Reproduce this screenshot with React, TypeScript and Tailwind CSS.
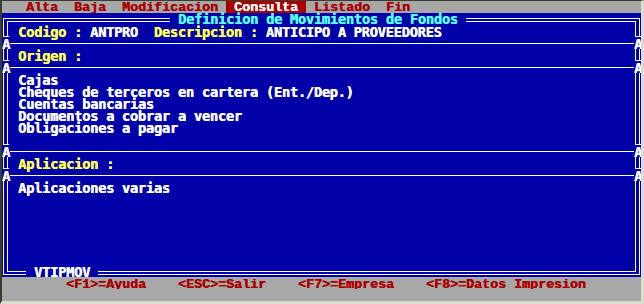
import React from "react";

const cell = "w-[8px] h-[12px] shrink-0";

const Vert = () => (
	<div className={cell + " flex"}>
		<div className="ml-[1px] w-[5px] h-full border-x border-white" />
	</div>
);

const Corner = ({ kind }: { kind: "tl" | "tr" | "bl" | "br" }) => {
	const rects: Record<string, number[][]> = {
		tl: [[1, 5, 7, 1], [1, 5, 1, 7], [5, 8, 3, 1], [5, 8, 1, 4]],
		tr: [[0, 5, 6, 1], [5, 5, 1, 7], [0, 8, 2, 1], [1, 8, 1, 4]],
		bl: [[1, 0, 1, 10], [1, 9, 7, 1], [5, 0, 1, 7], [5, 6, 3, 1]],
		br: [[5, 0, 1, 10], [0, 9, 6, 1], [1, 0, 1, 7], [0, 6, 2, 1]],
	};
	return (
		<svg width="8" height="12" viewBox="0 0 8 12" className="shrink-0" shapeRendering="crispEdges">
			{rects[kind].map(([x, y, w, h], i) => (
				<rect key={i} x={x} y={y} width={w} height={h} fill="#fff" />
			))}
		</svg>
	);
};

const Double = ({ w, top }: { w: string; top: boolean }) => (
	<div className={w + " h-[12px] shrink-0 " + (top ? "pt-[5px]" : "pt-[6px]")}>
		<div className="h-[4px] border-y border-white" />
	</div>
);

const Row = ({ children }: { children?: React.ReactNode }) => (
	<div className="flex h-[12px] w-[640px] shrink-0">
		<Vert />
		<div className="w-[624px] h-[12px] whitespace-pre">{children}</div>
		<Vert />
	</div>
);

const Sep = () => (
	<div className="flex h-[12px] w-[640px] shrink-0 text-white">
		<div className={cell}>Ã</div>
		<div className="w-[624px] pt-[6px]">
			<div className="h-px bg-white" />
		</div>
		<div className={cell}>Ã</div>
	</div>
);

const Yellow = ({ children }: { children: React.ReactNode }) => (
	<span className="text-[#ffff55]">{children}</span>
);

const App = () => {
	const origen = [
		"Cajas",
		"Cheques de terceros en cartera (Ent./Dep.)",
		"Cuentas bancarias",
		"Documentos a cobrar a vencer",
		"Obligaciones a pagar",
	];

	return (
		<div className="w-[644px] h-[304px] border-t border-l-2 border-r-[3px] border-b-[3px] border-t-[#3b3b30] border-l-[#3b3b30] border-r-[#dcdcd0] border-b-[#dcdcd0] bg-[#a8a8a8]">
			<div className="w-[639px] h-[300px] overflow-hidden flex flex-col font-['Liberation_Mono',monospace] font-bold text-[13.33px] leading-[13px]">
				{/* menu */}
				<div className="flex h-[12px] w-[640px] shrink-0 bg-[#a8a8a8] text-[#a80000] whitespace-pre [text-shadow:0.5px_0_0_currentColor]">
					<span>{"   Alta  Baja  Modificacion "}</span>
					<span className="bg-[#a80000] text-white">{" Consulta "}</span>
					<span>{" Listado  Fin"}</span>
				</div>

				{/* window */}
				<div className="flex flex-col bg-[#0000a8] text-white font-['DejaVu_Sans_Mono',monospace] text-[13.7px] tracking-[-0.25px] leading-[15px] [text-shadow:0.5px_0_0_currentColor]">
					<div className="flex h-[12px] w-[640px] shrink-0">
						<Corner kind="tl" />
						<Double w="w-[160px]" top />
						<div className="w-[296px] h-[12px] shrink-0 whitespace-pre text-[#55ffff] leading-[13px]">
							{" Definicion de Movimientos de Fondos "}
						</div>
						<Double w="w-[168px]" top />
						<Corner kind="tr" />
					</div>
					<Row>
						<Yellow>{" Codigo : "}</Yellow>
						ANTPRO
						<Yellow>{"  Descripcion : "}</Yellow>
						ANTICIPO A PROVEEDORES
					</Row>
					<Sep />
					<Row>
						<Yellow>{" Origen :"}</Yellow>
					</Row>
					<Sep />
					{origen.map((t) => (
						<Row key={t}>{" " + t}</Row>
					))}
					<Row />
					<Sep />
					<Row>
						<Yellow>{" Aplicacion :"}</Yellow>
					</Row>
					<Sep />
					<Row>{" Aplicaciones varias"}</Row>
					<Row />
					<Row />
					<Row />
					<Row />
					<Row />
					<Row />
					<div className="flex h-[12px] w-[640px] shrink-0">
						<Corner kind="bl" />
						<Double w="w-[16px]" top={false} />
						<div className="w-[72px] h-[12px] shrink-0 whitespace-pre leading-[14px]">{" VTIPMOV "}</div>
						<Double w="w-[536px]" top={false} />
						<Corner kind="br" />
					</div>
				</div>

				{/* status */}
				<div className="h-[12px] w-[640px] shrink-0 bg-[#a8a8a8] text-[#a80000] whitespace-pre leading-[15px] [text-shadow:0.5px_0_0_currentColor]">
					{"        <F1>=Ayuda    <ESC>=Salir    <F7>=Empresa    <F8>=Datos Impresion"}
				</div>
				<div className="h-[12px] w-[640px] shrink-0 bg-[#a8a8a8]" />
			</div>
		</div>
	);
};

export default App;
